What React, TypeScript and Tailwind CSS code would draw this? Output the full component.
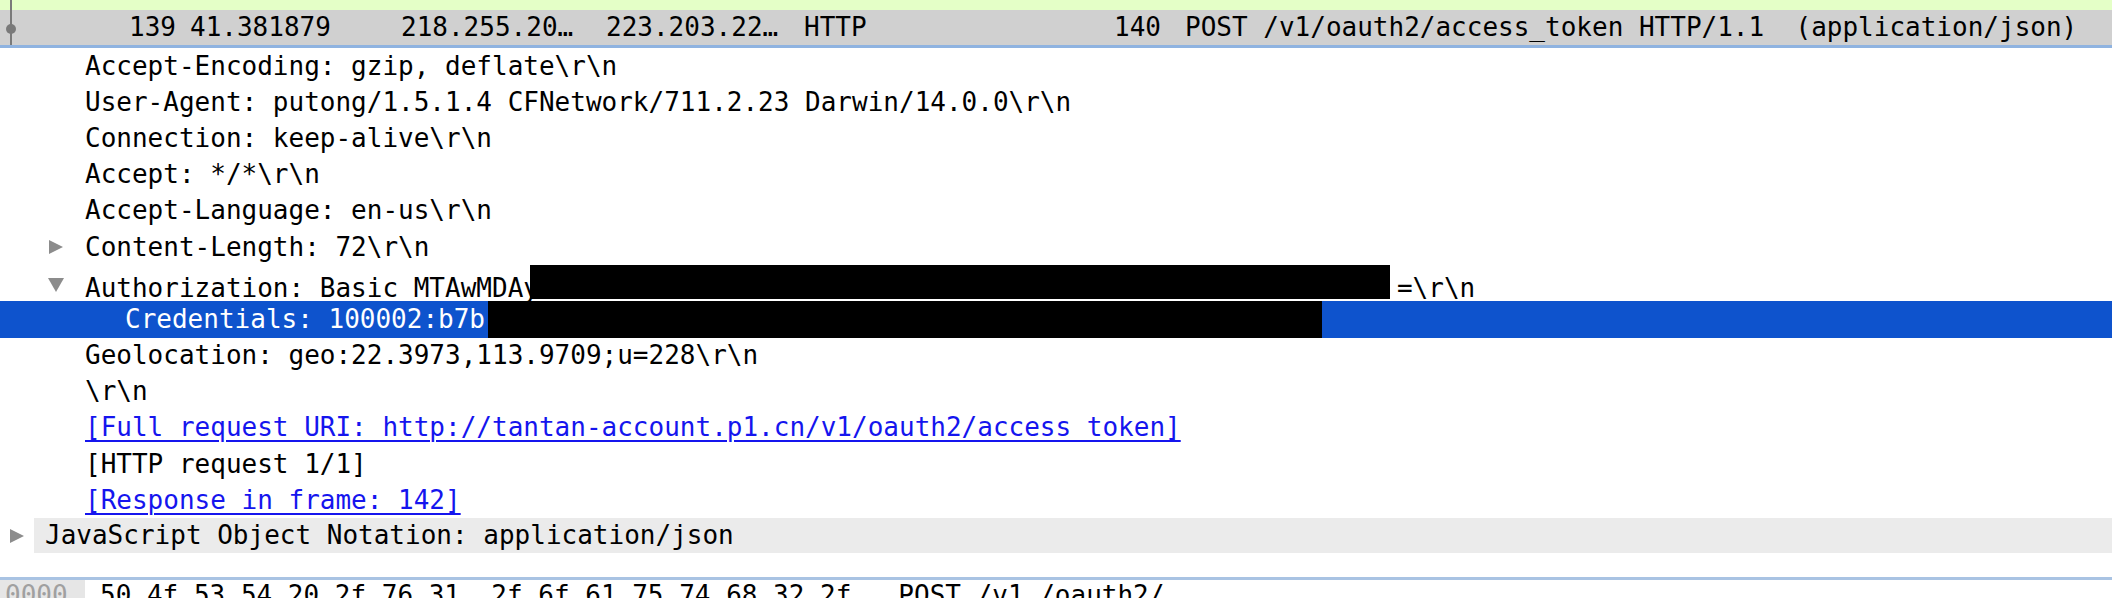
const mono = "font-['DejaVu_Sans_Mono','Liberation_Mono',monospace]";

function Tri({ down }: { down?: boolean }) {
  return down ? (
    <svg width="18" height="16" viewBox="0 0 18 16" className="shrink-0">
      <polygon points="1,1 17,1 9,15" fill="#8c8c8c" />
    </svg>
  ) : (
    <svg width="16" height="16" viewBox="0 0 16 16" className="shrink-0">
      <polygon points="1,1 15,8 1,15" fill="#8c8c8c" />
    </svg>
  );
}

function Row({ children, className = "" }: { children: React.ReactNode; className?: string }) {
  return <div className={`flex h-[36.2px] items-center whitespace-pre ${className}`}>{children}</div>;
}

export default function App() {
  const plain = [
    "Accept-Encoding: gzip, deflate\\r\\n",
    "User-Agent: putong/1.5.1.4 CFNetwork/711.2.23 Darwin/14.0.0\\r\\n",
    "Connection: keep-alive\\r\\n",
    "Accept: */*\\r\\n",
    "Accept-Language: en-us\\r\\n",
  ];
  return (
    <div className={`${mono} h-[598px] w-[2112px] overflow-hidden bg-white text-[26px] text-black`}>
      {/* packet list */}
      <div className="relative">
        <div className="h-[10px] bg-[#e4ffc7]" />
        <div className="flex h-[35px] items-center whitespace-pre bg-[#d0d0d0]">
          <span className="w-[176px] text-right">139</span>
          <span className="ml-[14px] w-[211px]">41.381879</span>
          <span className="w-[205px]">218.255.20…</span>
          <span className="w-[198px]">223.203.22…</span>
          <span className="w-[310px]">HTTP</span>
          <span className="w-[47px] text-right">140</span>
          <span className="ml-[24px]">POST /v1/oauth2/access_token HTTP/1.1  (application/json)</span>
        </div>
        <svg width="24" height="45" className="absolute left-0 top-0">
          <line x1="11" y1="0" x2="11" y2="45" stroke="#7a7a7a" strokeWidth="2" />
          <circle cx="11" cy="29" r="5" fill="#7a7a7a" />
        </svg>
      </div>
      <div className="h-[3px] bg-[#8fb3e0]" />

      {/* packet details */}
      <div>
        {plain.map((t) => (
          <Row key={t} className="pl-[85px]">{t}</Row>
        ))}
        <Row className="pl-[48px]">
          <Tri />
          <span className="ml-[21px]">Content-Length: 72\r\n</span>
        </Row>
        <Row className="items-start pl-[47px]">
          <span className="mt-[12px]"><Tri down /></span>
          <span className="ml-[20px] mt-[4px]">Authorization: Basic MTAwMDAy</span>
          <span className="ml-[-9px] h-[34px] w-[860px] bg-black" />
          <span className="ml-[7px] mt-[4px]">=\r\n</span>
        </Row>
        <Row className="bg-[#0e53cd] pl-[125px] text-white">
          <span>Credentials: 100002:b7b</span>
          <span className="ml-[3px] h-full w-[834px] bg-black" />
        </Row>
        <Row className="pl-[85px]">Geolocation: geo:22.3973,113.9709;u=228\r\n</Row>
        <Row className="pl-[85px]">\r\n</Row>
        <Row className="pl-[85px]">
          <span className="text-[#1515ee] underline decoration-2 underline-offset-4">
            [Full request URI: http://tantan-account.p1.cn/v1/oauth2/access_token]
          </span>
        </Row>
        <Row className="pl-[85px]">[HTTP request 1/1]</Row>
        <Row className="pl-[85px]">
          <span className="text-[#1515ee] underline decoration-2 underline-offset-4">[Response in frame: 142]</span>
        </Row>
        <div className="flex h-[35px] items-center whitespace-pre">
          <div className="flex w-[34px] justify-center">
            <Tri />
          </div>
          <div className="flex h-full flex-1 items-center bg-[#ebebeb] pl-[11px]">JavaScript Object Notation: application/json</div>
        </div>
      </div>

      {/* bytes */}
      <div className="h-[24px]" />
      <div className="h-[3px] bg-[#a9c3e3]" />
      <div className="flex h-[30px] items-center whitespace-pre">
        <div className="flex h-full w-[85px] items-center bg-[#e6e6e6] pl-[5px] text-[#a0a0a0]">0000</div>
        <span className="ml-[15px]">50 4f 53 54 20 2f 76 31  2f 6f 61 75 74 68 32 2f   POST /v1 /oauth2/</span>
      </div>
    </div>
  );
}
